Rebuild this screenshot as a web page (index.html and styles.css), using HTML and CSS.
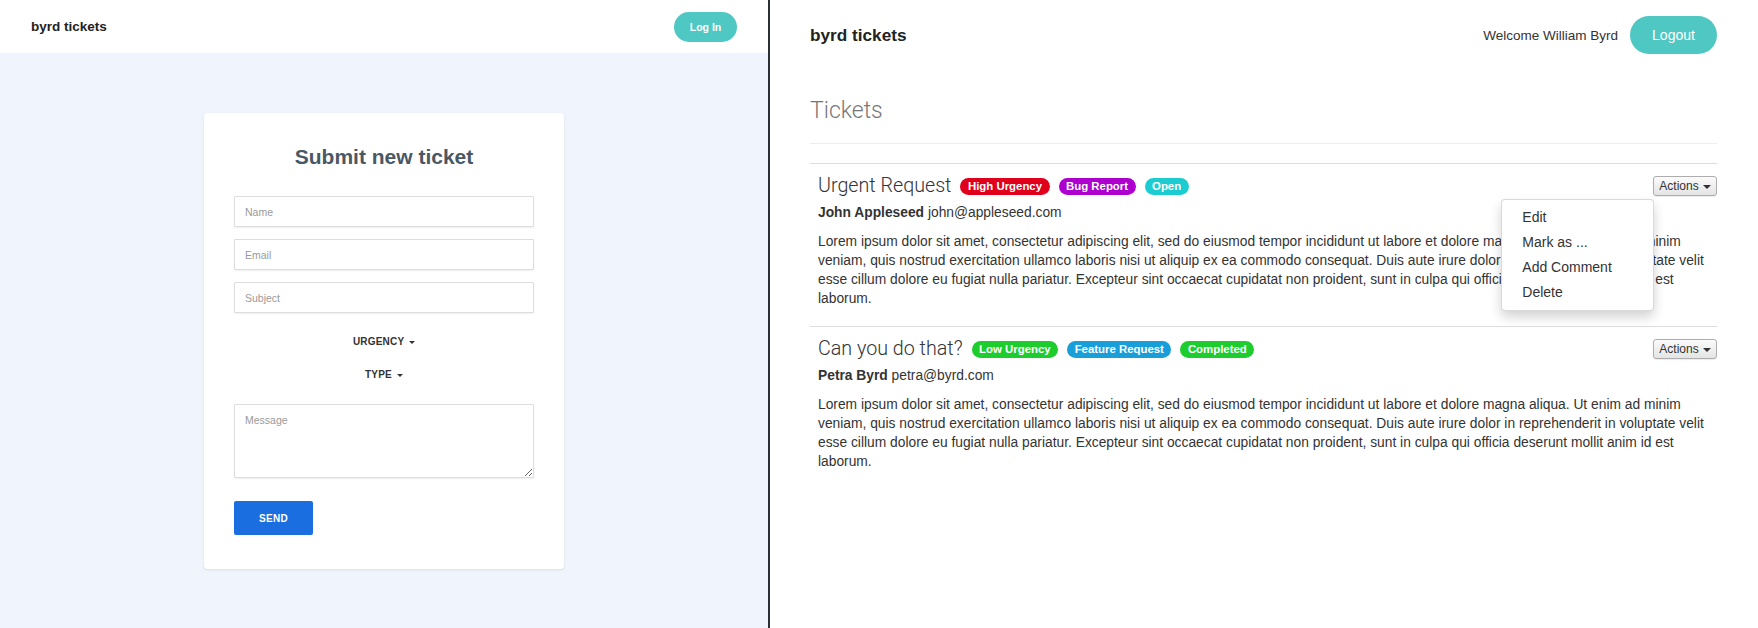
FILE: index.html
```html
<!DOCTYPE html>
<html lang="en">
<head>
<meta charset="utf-8">
<title>byrd tickets</title>
<link rel="stylesheet" href="styles.css">
</head>
<body>
<div class="page">
  <section class="pane pane-form">
    <header class="nav nav-form">
      <span class="brand brand-sm">byrd tickets</span>
      <button class="pill pill-sm" type="button">Log In</button>
    </header>
    <main class="form-area">
      <form class="card">
        <h2 class="card-title">Submit new ticket</h2>
        <input class="field field-gap" type="text" placeholder="Name">
        <input class="field field-gap" type="text" placeholder="Email">
        <input class="field" type="text" placeholder="Subject">
        <div class="toggle toggle-first">URGENCY <span class="caret caret-sm"></span></div>
        <div class="toggle toggle-second">TYPE <span class="caret caret-sm"></span></div>
        <textarea class="field field-area" placeholder="Message"></textarea>
        <button class="send" type="button">SEND</button>
      </form>
    </main>
  </section>
  <div class="divider"></div>
  <section class="pane pane-list">
    <header class="nav nav-list">
      <span class="brand brand-lg">byrd tickets</span>
      <div class="user">
        <span class="welcome">Welcome William Byrd</span>
        <button class="pill pill-lg" type="button">Logout</button>
      </div>
    </header>
    <h1 class="page-title">Tickets</h1>
    <div class="tickets">
      <article class="ticket">
        <div class="ticket-head">
          <h3 class="ticket-title">Urgent Request</h3>
          <span class="badge badge-red">High Urgency</span>
          <span class="badge badge-purple">Bug Report</span>
          <span class="badge badge-cyan">Open</span>
          <div class="actions">
            <button class="actions-btn" type="button">Actions <span class="caret"></span></button>
            <ul class="menu">
              <li>Edit</li>
              <li>Mark as ...</li>
              <li>Add Comment</li>
              <li>Delete</li>
            </ul>
          </div>
        </div>
        <div class="author"><b>John Appleseed</b> john@appleseed.com</div>
        <p class="ticket-body">Lorem ipsum dolor sit amet, consectetur adipiscing elit, sed do eiusmod tempor incididunt ut labore et dolore magna aliqua. Ut enim ad minim veniam, quis nostrud exercitation ullamco laboris nisi ut aliquip ex ea commodo consequat. Duis aute irure dolor in reprehenderit in voluptate velit esse cillum dolore eu fugiat nulla pariatur. Excepteur sint occaecat cupidatat non proident, sunt in culpa qui officia deserunt mollit anim id est laborum.</p>
      </article>
      <article class="ticket">
        <div class="ticket-head">
          <h3 class="ticket-title">Can you do that?</h3>
          <span class="badge badge-green">Low Urgency</span>
          <span class="badge badge-blue">Feature Request</span>
          <span class="badge badge-green">Completed</span>
          <div class="actions">
            <button class="actions-btn" type="button">Actions <span class="caret"></span></button>
          </div>
        </div>
        <div class="author"><b>Petra Byrd</b> petra@byrd.com</div>
        <p class="ticket-body">Lorem ipsum dolor sit amet, consectetur adipiscing elit, sed do eiusmod tempor incididunt ut labore et dolore magna aliqua. Ut enim ad minim veniam, quis nostrud exercitation ullamco laboris nisi ut aliquip ex ea commodo consequat. Duis aute irure dolor in reprehenderit in voluptate velit esse cillum dolore eu fugiat nulla pariatur. Excepteur sint occaecat cupidatat non proident, sunt in culpa qui officia deserunt mollit anim id est laborum.</p>
      </article>
    </div>
  </section>
</div>
</body>
</html>
```

FILE: styles.css
```css
* { box-sizing: border-box; }

html, body {
  margin: 0;
  padding: 0;
  background: #ffffff;
}

body {
  font-family: "Liberation Sans", Arial, sans-serif;
  color: #333333;
}

.page {
  display: flex;
  height: 628px;
  overflow: hidden;
}

.pane-form {
  width: 768px;
  flex: 0 0 768px;
  background: #f0f5fd;
  display: flex;
  flex-direction: column;
}

.divider {
  width: 2px;
  flex: 0 0 2px;
  background: #2b3035;
}

.pane-list {
  flex: 1 1 auto;
  background: #ffffff;
  padding: 0 41px 0 40px;
}

.nav {
  display: flex;
  align-items: center;
  justify-content: space-between;
}

.nav-form {
  height: 53px;
  background: #ffffff;
  padding: 0 31px;
}

.nav-list {
  height: 70px;
}

.brand {
  font-weight: bold;
  color: #222222;
}

.brand-sm { font-size: 13.5px; }
.brand-lg { font-size: 17.2px; }

.pill {
  border: 0;
  background: #4fc7c3;
  color: #ffffff;
  font-family: "Liberation Sans", Arial, sans-serif;
  padding: 0;
  cursor: pointer;
}

.pill-sm {
  width: 63px;
  height: 30px;
  border-radius: 15px;
  font-size: 10.5px;
  font-weight: bold;
}

.pill-lg {
  width: 87px;
  height: 38px;
  border-radius: 19px;
  font-size: 14px;
}

.user {
  display: flex;
  align-items: center;
  gap: 12px;
}

.welcome {
  font-size: 13.5px;
  color: #333333;
}

/* form */
.form-area {
  flex: 1 1 auto;
  display: flex;
  justify-content: center;
  align-items: flex-start;
}

.card {
  width: 360px;
  margin-top: 60px;
  padding: 31px 30px 34px;
  background: #ffffff;
  border-radius: 4px;
  box-shadow: 0 1px 3px rgba(0, 0, 0, 0.09);
  display: flex;
  flex-direction: column;
}

.card-title {
  margin: 0 0 26px;
  font-size: 21px;
  line-height: 26px;
  font-weight: bold;
  color: #4a5764;
  text-align: center;
}

.field {
  display: block;
  width: 100%;
  height: 31px;
  border: 1px solid #dddddd;
  border-radius: 1px;
  box-shadow: 0 1px 2px rgba(0, 0, 0, 0.07);
  padding: 0 10px;
  font-family: "Liberation Sans", Arial, sans-serif;
  font-size: 10.5px;
  color: #333333;
  background: #ffffff;
  outline: none;
}

.field::placeholder { color: #9a9a9a; }

.field-gap { margin-bottom: 12px; }

.field-area {
  height: 74px;
  margin-top: 19px;
  padding: 9px 10px;
  resize: vertical;
}

.toggle {
  height: 20px;
  line-height: 20px;
  text-align: center;
  font-size: 10px;
  font-weight: bold;
  letter-spacing: 0.2px;
  color: #333333;
}

.toggle-first { margin-top: 19px; }
.toggle-second { margin-top: 13px; }

.caret {
  display: inline-block;
  width: 0;
  height: 0;
  border-top: 4px solid #333333;
  border-left: 4px solid transparent;
  border-right: 4px solid transparent;
  vertical-align: middle;
  margin-left: 1px;
}

.caret-sm {
  border-top-width: 3px;
  border-left-width: 3px;
  border-right-width: 3px;
  margin-left: 2px;
}

.send {
  align-self: flex-start;
  margin-top: 23px;
  width: 79px;
  height: 34px;
  border: 0;
  border-radius: 2px;
  background: #1b6ee0;
  color: #ffffff;
  font-family: "Liberation Sans", Arial, sans-serif;
  font-size: 10px;
  font-weight: bold;
  letter-spacing: 0.3px;
}

/* list */
.page-title {
  margin: 28px 0 19px;
  padding-bottom: 19px;
  border-bottom: 1px solid #eeeeee;
  font-family: Roboto, "Liberation Sans", sans-serif;
  font-weight: 300;
  font-size: 23px;
  line-height: 26px;
  color: #777777;
}

.ticket {
  border-top: 1px solid #dddddd;
  padding: 11px 0 18px 8px;
}

.ticket-head {
  display: flex;
  align-items: center;
  gap: 9px;
  height: 22px;
}

.ticket-title {
  margin: 0;
  font-family: Roboto, "Liberation Sans", sans-serif;
  font-weight: 300;
  font-size: 19.7px;
  line-height: 22px;
  color: #333333;
}

.badge {
  display: inline-block;
  height: 17px;
  line-height: 17px;
  padding: 0 7.5px;
  border-radius: 9px;
  font-size: 11.4px;
  font-weight: bold;
  color: #ffffff;
  white-space: nowrap;
}

.badge-red { background: #e0001b; }
.badge-purple { background: #ad00cf; }
.badge-cyan { background: #1dccd0; }
.badge-green { background: #1dcc2d; }
.badge-blue { background: #189fda; }

.actions {
  margin-left: auto;
  position: relative;
}

.actions-btn {
  display: block;
  height: 20px;
  padding: 0 5px;
  border: 1px solid #adadad;
  border-radius: 3px;
  background: linear-gradient(#fbfbfb, #e4e4e4);
  box-shadow: 0 1px 1px rgba(0, 0, 0, 0.08);
  font-family: "Liberation Sans", Arial, sans-serif;
  font-size: 12px;
  color: #333333;
}

.menu {
  position: absolute;
  top: calc(100% + 3px);
  right: calc(100% - 1px);
  width: 153px;
  margin: 0;
  padding: 5px 0;
  list-style: none;
  background: #ffffff;
  border: 1px solid rgba(0, 0, 0, 0.15);
  border-radius: 4px;
  box-shadow: 0 6px 12px rgba(0, 0, 0, 0.175);
  z-index: 10;
}

.menu li {
  padding: 0 20px;
  line-height: 25px;
  font-size: 14px;
  color: #333333;
  white-space: nowrap;
}

.author {
  margin-top: 6px;
  font-size: 13.8px;
  line-height: 19px;
  color: #333333;
}

.ticket-body {
  margin: 10px 0 0;
  font-size: 13.8px;
  line-height: 19px;
  color: #333333;
}
```
